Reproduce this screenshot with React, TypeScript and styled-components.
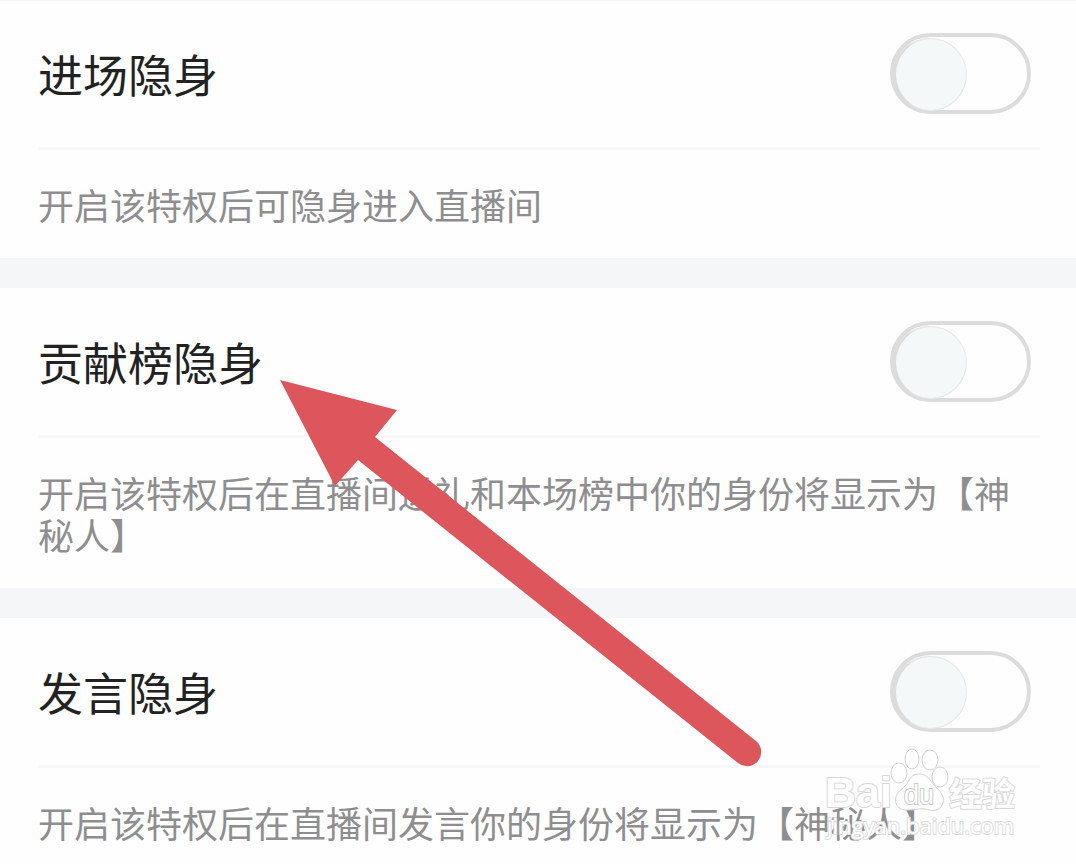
import React, { useId, useState } from 'react';
import styled, { createGlobalStyle } from 'styled-components';

const GlobalStyle = createGlobalStyle`
  * { box-sizing: border-box; }
  body {
    margin: 0;
    background: #fefefe;
    font-family: "Noto Sans CJK SC", sans-serif;
  }
`;

const Page = styled.main`
  position: relative;
  display: flex;
  flex-direction: column;
  gap: 30px;
  min-height: 100vh;
  background: #f5f6f8;
  overflow: hidden;
`;

const Card = styled.section`
  background: #fefefe;
  padding: 0 36px 33px 38px;

  &:first-child { box-shadow: inset 0 1px #f3f4f5; }
  &:last-of-type { flex: 1; padding-bottom: 20px; }
`;

const Header = styled.div`
  display: flex;
  align-items: center;
  justify-content: space-between;
  height: 150px;
  padding-right: 9px;
  border-bottom: 3px solid #f8f8f8;
`;

const Title = styled.label`
  font-size: 45px;
  line-height: 60px;
  color: #222222;
`;

const Toggle = styled.input`
  appearance: none;
  flex: none;
  width: 141px;
  height: 81px;
  margin: 0;
  border: 4px solid #dcdcdc;
  border-radius: 41px;
  background: #fefefe;
  cursor: pointer;

  &::before {
    content: "";
    display: block;
    width: 70px;
    height: 71px;
    margin: 1px 0;
    border: 1px solid #e3e8e9;
    border-left: 2px solid #dcdcdc;
    border-radius: 50%;
    background: #f4f8f9;
    box-shadow: -1px 0 #dcdcdc;
  }

  &:checked::before { margin-left: 63px; }
`;

const Description = styled.p`
  margin: 0;
  padding-top: 33px;
  font-size: 36px;
  line-height: 42px;
  color: #8e8e90;
`;

const Arrow = styled.svg`
  position: absolute;
  left: 280px;
  top: 380px;
  pointer-events: none;
`;

const Watermark = styled.svg`
  position: absolute;
  right: 54px;
  bottom: 20px;
  pointer-events: none;
`;

type Setting = { title: string; description: string };

const settings: Setting[] = [
  { title: '进场隐身', description: '开启该特权后可隐身进入直播间' },
  { title: '贡献榜隐身', description: '开启该特权后在直播间送礼和本场榜中你的身份将显示为【神秘人】' },
  { title: '发言隐身', description: '开启该特权后在直播间发言你的身份将显示为【神秘人】' },
];

function SettingCard({ title, description }: Setting) {
  const id = useId();
  const [on, setOn] = useState(false);
  return (
    <Card>
      <Header>
        <Title htmlFor={id}>{title}</Title>
        <Toggle id={id} type="checkbox" role="switch" checked={on} onChange={e => setOn(e.target.checked)} />
      </Header>
      <Description>{description}</Description>
    </Card>
  );
}

export default function App() {
  return (
    <>
      <GlobalStyle />
      <Page>
        {settings.map(s => <SettingCard key={s.title} {...s} />)}
        <Arrow width="482" height="388" viewBox="0 0 482 388" aria-hidden="true">
          <path d="M0 0 L117 30 L95 57 L476 361 A14 14 0 0 1 458 383 L78 80 L55 106 Z" fill="#dc565c" />
        </Arrow>
        <Watermark width="200" height="98" viewBox="0 0 200 98">
          <g fill="#ffffff" stroke="#d8d8d8" strokeWidth="2" strokeLinejoin="round" paintOrder="stroke">
            <text x="3" y="61" fontFamily="Liberation Sans, sans-serif" fontWeight="700" fontSize="43">Bai</text>
            <text x="127" y="60" fontFamily="Noto Sans CJK SC, sans-serif" fontWeight="700" fontSize="33">经验</text>
          </g>
          <g fill="#ffffff" stroke="#d2d2d2" strokeWidth="1">
            <ellipse cx="77" cy="27" rx="8" ry="10" />
            <ellipse cx="90" cy="13" rx="7" ry="10" />
            <ellipse cx="108" cy="14" rx="8" ry="10" />
            <ellipse cx="118" cy="31" rx="8" ry="10" />
            <path d="M97 28 C105 28 108 34 112 39 C118 45 123 50 121 57 C118 66 110 65 103 63 C98 62 93 64 87 64 C77 65 72 59 74 51 C76 44 83 42 86 36 C89 30 92 28 97 28 Z" />
          </g>
          <text x="82" y="58" fill="#ffffff" stroke="#cccccc" strokeWidth="2" paintOrder="stroke" fontFamily="Liberation Sans, sans-serif" fontSize="27">du</text>
          <text x="5" y="88" fill="#ffffff" stroke="#dddddd" strokeWidth="2" paintOrder="stroke" fontFamily="Open Sans, sans-serif" fontSize="22">jingyan.baidu.com</text>
        </Watermark>
      </Page>
    </>
  );
}
